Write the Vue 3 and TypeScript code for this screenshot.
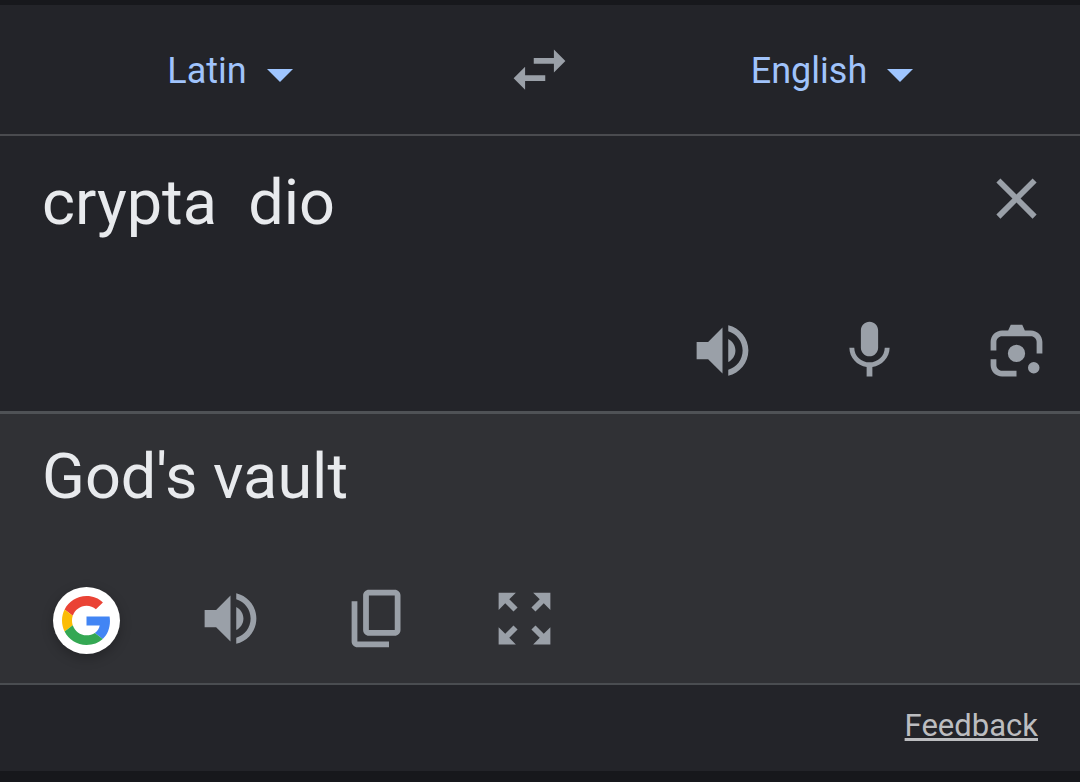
<script setup lang="ts">
import { ref } from 'vue'

const languages = ['Latin', 'English']
const from = ref('Latin')
const to = ref('English')
const source = ref('crypta  dio')
const result = ref("God's vault")

const icons = {
  swap: 'M6.99 11L3 15l3.99 4v-3H14v-2H6.99v-3zM21 9l-3.99-4v3H10v2h7.01v3L21 9z',
  close: 'M19 6.41L17.59 5 12 10.59 6.41 5 5 6.41 10.59 12 5 17.59 6.41 19 12 13.41 17.59 19 19 17.59 13.41 12z',
  volume:
    'M3 9v6h4l5 5V4L7 9H3zm13.5 3c0-1.77-1.02-3.29-2.5-4.03v8.05c1.48-.73 2.5-2.25 2.5-4.02zM14 3.23v2.06c2.89.86 5 3.54 5 6.71s-2.11 5.85-5 6.71v2.06c4.01-.91 7-4.49 7-8.77s-2.99-7.86-7-8.77z',
  mic: 'M12 14c1.66 0 3-1.34 3-3V5c0-1.66-1.34-3-3-3S9 3.34 9 5v6c0 1.66 1.34 3 3 3zm5.3-3c0 3-2.54 5.1-5.3 5.1S6.7 14 6.7 11H5c0 3.41 2.72 6.23 6 6.72V21h2v-3.28c3.28-.48 6-3.3 6-6.72h-1.7z',
  lens: 'M3 12V9c0-2.21 1.79-4 4-4h2.1l.9-2h4l.9 2H17c2.21 0 4 1.79 4 4v4h-2V9c0-1.1-.9-2-2-2H7c-1.1 0-2 .9-2 2v3H3zM3 15h2v2c0 1.1.9 2 2 2h5v2H7c-2.21 0-4-1.79-4-4v-2zM15 13a3 3 0 1 1-6 0a3 3 0 0 1 6 0zM20 18a2 2 0 1 1-4 0a2 2 0 0 1 4 0z',
  copy: 'M18 2H9c-1.1 0-2 .9-2 2v12c0 1.1.9 2 2 2h9c1.1 0 2-.9 2-2V4c0-1.1-.9-2-2-2zm0 14H9V4h9v12zM3 6h2v14h11v2H5c-1.1 0-2-.9-2-2V6z',
  expand:
    'M15 3l2.3 2.3-2.89 2.87 1.42 1.42L18.7 6.7 21 9V3h-6zM3 9l2.3-2.3 2.87 2.89 1.42-1.42L6.7 5.3 9 3H3v6zm6 12l-2.3-2.3 2.89-2.87-1.42-1.42L5.3 17.3 3 15v6h6zm12-6l-2.3 2.3-2.87-2.89-1.42 1.42 2.89 2.87L15 21h6v-6z',
}

const sourceActions = [
  { label: 'Listen', icon: icons.volume },
  { label: 'Speak', icon: icons.mic },
  { label: 'Translate an image', icon: icons.lens },
]
const resultActions = [
  { label: 'Listen to translation', icon: icons.volume },
  { label: 'Copy', icon: icons.copy },
  { label: 'Full screen', icon: icons.expand },
]

function swap() {
  const previous = from.value
  from.value = to.value
  to.value = previous
}
</script>

<template>
  <main class="translator">
    <header class="languages">
      <label class="language">
        <select v-model="from" aria-label="Source language">
          <option v-for="l in languages" :key="l">{{ l }}</option>
        </select>
        <svg class="arrow" viewBox="0 0 26 13" aria-hidden="true"><path d="M0 0h26L13 13z" /></svg>
      </label>
      <button class="icon-button" type="button" aria-label="Swap languages" @click="swap">
        <svg viewBox="0 0 24 24" aria-hidden="true"><path :d="icons.swap" /></svg>
      </button>
      <label class="language target">
        <select v-model="to" aria-label="Target language">
          <option v-for="l in languages" :key="l">{{ l }}</option>
        </select>
        <svg class="arrow" viewBox="0 0 26 13" aria-hidden="true"><path d="M0 0h26L13 13z" /></svg>
      </label>
    </header>

    <section class="source">
      <div class="entry">
        <textarea v-model="source" class="phrase" rows="1" spellcheck="false" aria-label="Source text"></textarea>
        <button class="icon-button" type="button" aria-label="Clear" @click="source = ''">
          <svg viewBox="0 0 24 24" aria-hidden="true"><path :d="icons.close" /></svg>
        </button>
      </div>
      <div class="actions">
        <button v-for="a in sourceActions" :key="a.label" class="icon-button" type="button" :aria-label="a.label">
          <svg viewBox="0 0 24 24" aria-hidden="true"><path :d="a.icon" /></svg>
        </button>
      </div>
    </section>

    <section class="result">
      <p class="phrase">{{ result }}</p>
      <div class="actions">
        <button class="google" type="button" aria-label="Search with Google">
          <svg viewBox="0 0 48 48" aria-hidden="true">
            <path fill="#ea4335" d="M24 9.5c3.54 0 6.71 1.22 9.21 3.6l6.85-6.85C35.9 2.38 30.47 0 24 0 14.62 0 6.51 5.38 2.56 13.22l7.98 6.19C12.43 13.72 17.74 9.5 24 9.5z" />
            <path fill="#4285f4" d="M46.98 24.55c0-1.57-.15-3.09-.38-4.55H24v9.02h12.94c-.58 2.96-2.26 5.48-4.78 7.18l7.73 6c4.51-4.18 7.09-10.36 7.09-17.65z" />
            <path fill="#fbbc05" d="M10.53 28.59c-.48-1.45-.76-2.99-.76-4.59s.27-3.14.76-4.59l-7.98-6.19C.92 16.46 0 20.12 0 24c0 3.88.92 7.54 2.56 10.78l7.97-6.19z" />
            <path fill="#34a853" d="M24 48c6.48 0 11.93-2.13 15.89-5.81l-7.73-6c-2.15 1.45-4.92 2.3-8.16 2.3-6.26 0-11.57-4.22-13.47-9.91l-7.98 6.19C6.51 42.62 14.62 48 24 48z" />
          </svg>
        </button>
        <button v-for="a in resultActions" :key="a.label" class="icon-button" type="button" :aria-label="a.label">
          <svg viewBox="0 0 24 24" aria-hidden="true"><path :d="a.icon" /></svg>
        </button>
      </div>
    </section>

    <footer class="footer">
      <a href="#feedback">Feedback</a>
    </footer>
  </main>
</template>

<style>
body {
  margin: 0;
  background: #17181c;
}
</style>

<style scoped>
.translator {
  border-top: 5px solid #17181c;
  background: #232429;
  color: #e8eaed;
  font-family: Roboto, 'Liberation Sans', sans-serif;
}

.languages {
  display: grid;
  grid-template-columns: 1fr 158px 1fr;
  align-items: center;
  justify-items: center;
  height: 129px;
  padding-right: 2px;
  border-bottom: 2px solid #4a4b4f;
}

.language {
  display: flex;
  align-items: center;
  gap: 20px;
  padding-top: 2px;
}

.target {
  margin-right: 32px;
}

.language select {
  appearance: none;
  field-sizing: content;
  margin: 0;
  padding: 0;
  border: 0;
  background: none;
  color: #a0c3fb;
  font: 36px/44px Roboto, 'Liberation Sans', sans-serif;
}

.arrow {
  width: 26px;
  height: 13px;
  margin-top: 10px;
  fill: #9ec5ff;
}

.icon-button {
  flex: none;
  width: 69px;
  height: 69px;
  padding: 0;
  border: 0;
  background: none;
  fill: #9aa0a8;
  cursor: pointer;
}

.icon-button svg,
.google svg {
  display: block;
  width: 100%;
  height: 100%;
}

.source {
  padding: 28px 29px 26px 42px;
  border-bottom: 3px solid #4f5256;
}

.entry {
  display: flex;
  align-items: flex-start;
}

.phrase {
  flex: 1;
  margin: 0;
  font: 63px/78px Roboto, 'Liberation Sans', sans-serif;
}

textarea.phrase {
  height: 78px;
  min-width: 0;
  padding: 0;
  border: 0;
  outline: 0;
  resize: none;
  overflow: hidden;
  background: none;
  color: inherit;
}

.actions {
  display: flex;
  align-items: center;
  gap: 78px;
}

.source .actions {
  justify-content: flex-end;
  margin-top: 74px;
}

.result {
  padding: 24px 30px 29px 42px;
  border-bottom: 2px solid #4a4d51;
  background: #303135;
}

.result .actions {
  margin: 67px 0 0 11px;
}

.google {
  width: 67px;
  height: 67px;
  margin: 4px -2px 0 0;
  padding: 9px;
  border: 0;
  border-radius: 50%;
  background: #fff;
  box-shadow: 0 4px 12px rgba(0, 0, 0, 0.25);
  cursor: pointer;
}

.footer {
  padding: 22px 42px 26px;
  text-align: right;
}

.footer a {
  color: #bcbdc0;
  font-size: 31px;
  line-height: 38px;
}
</style>
